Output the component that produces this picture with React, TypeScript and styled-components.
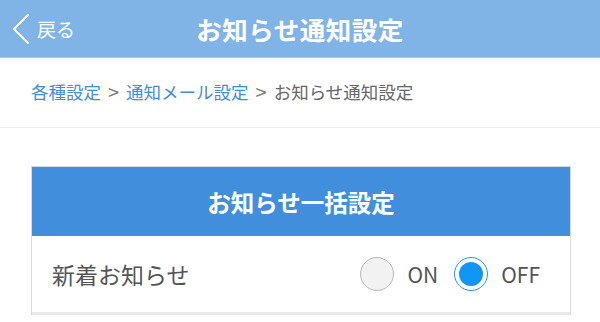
import React from 'react';
import styled, { createGlobalStyle } from 'styled-components';

const GlobalStyle = createGlobalStyle`
  html, body {
    margin: 0;
    padding: 0;
    background: #ffffff;
    font-family: "Noto Sans CJK JP", "Noto Sans", sans-serif;
  }
`;

const Page = styled.div`
  width: 600px;
  height: 322px;
  overflow: hidden;
  background: #ffffff;
`;

const Header = styled.header`
  position: relative;
  height: 57px;
  background: #80b4e7;
  border-bottom: 1px solid #a9cdf0;
  display: flex;
  align-items: center;
  justify-content: center;
`;

const BackButton = styled.a`
  position: absolute;
  left: 11px;
  top: 0;
  height: 57px;
  display: flex;
  align-items: center;
  gap: 6px;
  color: #ffffff;
  font-size: 19px;
  text-decoration: none;
`;

const HeaderTitle = styled.h1`
  margin: 0;
  color: #ffffff;
  font-size: 25.5px;
  font-weight: 700;
  letter-spacing: 0.5px;
`;

const Breadcrumb = styled.nav`
  height: 70px;
  border-bottom: 1px solid #ececec;
  display: flex;
  align-items: center;
  padding-left: 31px;
  padding-bottom: 3px;
  box-sizing: border-box;
  font-size: 17.5px;
  color: #666666;
`;

const Crumb = styled.span<{ $link?: boolean }>`
  color: ${(p) => (p.$link ? '#3d8ee0' : '#666666')};
`;

const Sep = styled.span`
  color: #777777;
  font-size: 20px;
  margin: 0 7px;
`;

const Content = styled.div`
  padding: 38px 29px 0 31px;
`;

const Card = styled.section`
  border: 1px solid #d6dbe0;
  border-bottom: none;
`;

const CardHeader = styled.div`
  height: 69px;
  background: #418fdc;
  display: flex;
  align-items: center;
  justify-content: center;
  color: #ffffff;
  font-size: 23.5px;
  font-weight: 700;
`;

const Row = styled.div`
  height: 76px;
  border-bottom: 3px solid #e9e9e9;
  display: flex;
  align-items: center;
  padding: 0 30px 0 20px;
`;

const RowLabel = styled.div`
  flex: 1;
  font-size: 23px;
  color: #555555;
`;

const RadioGroup = styled.div`
  display: flex;
  align-items: center;
`;

const RadioLabel = styled.label`
  display: flex;
  align-items: center;
  gap: 13px;
  margin-left: 16px;
  font-size: 21px;
  color: #555555;
`;

const Circle = styled.span<{ $checked?: boolean }>`
  box-sizing: border-box;
  width: 34px;
  height: 34px;
  border-radius: 50%;
  display: flex;
  align-items: center;
  justify-content: center;
  background: ${(p) => (p.$checked ? '#ffffff' : '#f2f2f2')};
  border: ${(p) => (p.$checked ? '1.5px solid #1a9cf2' : '1px solid #b9b9b9')};
`;

const Dot = styled.span`
  width: 24px;
  height: 24px;
  border-radius: 50%;
  background: #0f97f3;
`;

const Radio: React.FC<{ label: string; checked?: boolean }> = ({ label, checked }) => (
  <RadioLabel>
    <Circle $checked={checked}>{checked && <Dot />}</Circle>
    {label}
  </RadioLabel>
);

const App: React.FC = () => {
  return (
    <Page>
      <GlobalStyle />
      <Header>
        <BackButton href="#">
          <svg width="20" height="32" viewBox="0 0 20 32" fill="none">
            <path d="M17 2 L3 16 L17 30" stroke="#ffffff" strokeWidth="2" strokeLinecap="round" strokeLinejoin="round" />
          </svg>
          戻る
        </BackButton>
        <HeaderTitle>お知らせ通知設定</HeaderTitle>
      </Header>
      <Breadcrumb>
        <Crumb $link>各種設定</Crumb>
        <Sep>&gt;</Sep>
        <Crumb $link>通知メール設定</Crumb>
        <Sep>&gt;</Sep>
        <Crumb>お知らせ通知設定</Crumb>
      </Breadcrumb>
      <Content>
        <Card>
          <CardHeader>お知らせ一括設定</CardHeader>
          <Row>
            <RowLabel>新着お知らせ</RowLabel>
            <RadioGroup>
              <Radio label="ON" />
              <Radio label="OFF" checked />
            </RadioGroup>
          </Row>
        </Card>
      </Content>
    </Page>
  );
};

export default App;
